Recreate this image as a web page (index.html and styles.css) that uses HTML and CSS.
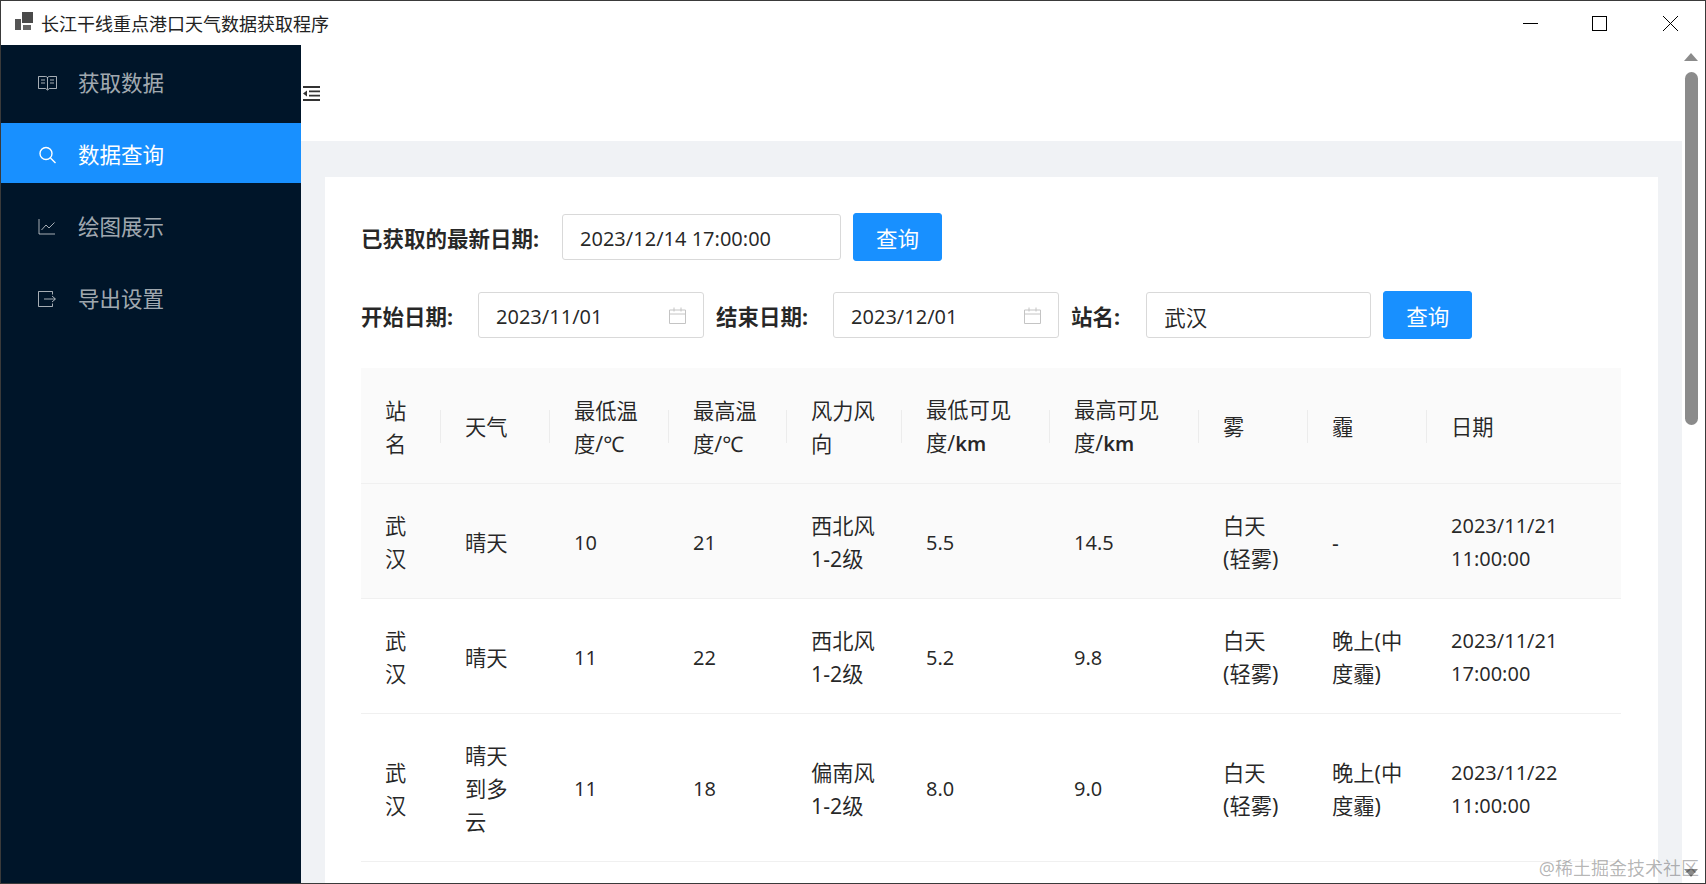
FILE: index.html
```html
<!DOCTYPE html>
<html lang="zh-CN">
<head>
  <meta charset="UTF-8">
  <title>长江干线重点港口天气数据获取程序</title>
  <link rel="stylesheet" href="styles.css">
</head>
<body>

<div class="window">
  <!-- 标题栏 -->
  <div class="titlebar">
    <svg class="app-logo" width="18" height="18" viewBox="0 0 18 18">
      <rect x="0" y="7" width="6" height="11" fill="#555"/>
      <rect x="7" y="0" width="11" height="11" fill="#4a4a4a"/>
      <rect x="8" y="13" width="8" height="5" fill="#666"/>
    </svg>
    <div class="app-title">长江干线重点港口天气数据获取程序</div>
    <div class="win-controls">
      <svg class="win-min" width="15" height="15" viewBox="0 0 15 15"><path d="M0 7.5H15" stroke="#000" fill="none"/></svg>
      <svg class="win-max" width="15" height="15" viewBox="0 0 15 15"><rect x="0.5" y="0.5" width="14" height="14" stroke="#000" fill="none"/></svg>
      <svg class="win-close" width="15" height="15" viewBox="0 0 15 15"><path d="M0 0L15 15M15 0L0 15" stroke="#000" fill="none"/></svg>
    </div>
  </div>

  <div class="app-body">
    <!-- 侧边菜单 -->
    <div class="sidebar">
      <div class="menu-item">
        <svg class="menu-icon" width="19" height="16" viewBox="0 0 19 16">
          <path d="M.5 1.5H7.5C8.7 1.5 9.5 2.2 9.5 3.2C9.5 2.2 10.3 1.5 11.5 1.5H18.5V13.5H11.5L9.5 15L7.5 13.5H.5ZM9.5 3.2V14.5M3 5H7M3 8H7M12 5H16M12 8H16" stroke="currentColor" fill="none"/>
        </svg>
        <span>获取数据</span>
      </div>
      <div class="menu-item active">
        <svg class="menu-icon" width="19" height="18" viewBox="0 0 19 18">
          <circle cx="8" cy="7.5" r="6" stroke="currentColor" stroke-width="1.4" fill="none"/>
          <path d="M12.5 12L17.5 17" stroke="currentColor" stroke-width="1.4" fill="none"/>
        </svg>
        <span>数据查询</span>
      </div>
      <div class="menu-item">
        <svg class="menu-icon" width="19" height="16" viewBox="0 0 19 16">
          <path d="M1 0V15H17M3.5 11L8 6L11 9L16.5 3.5" stroke="currentColor" fill="none"/>
        </svg>
        <span>绘图展示</span>
      </div>
      <div class="menu-item">
        <svg class="menu-icon" width="19" height="16" viewBox="0 0 19 16">
          <path d="M14.5 3.5V.5H.5V15.5H14.5V12.5M6 8H17M14 5L17.5 8L14 11" stroke="currentColor" fill="none"/>
        </svg>
        <span>导出设置</span>
      </div>
    </div>

    <div class="main">
      <div class="page-header">
        <svg class="collapse-icon" width="17" height="15" viewBox="0 0 17 15">
          <path d="M0 0H17V2H0ZM6 4.5H17V6.2H6ZM6 8.8H17V10.5H6ZM0 13H17V15H0Z" fill="#333"/>
          <path d="M0 7.5L4 4.5V10.5Z" fill="#333"/>
        </svg>
      </div>

      <div class="page-content">
        <div class="card">
          <div class="form-row">
            <label class="form-label">已获取的最新日期:</label>
            <div class="input w-latest num">2023/12/14 17:00:00</div>
            <button class="btn">查询</button>
          </div>

          <div class="form-row filters">
            <label class="form-label">开始日期:</label>
            <div class="input w-date num">
              <span>2023/11/01</span>
              <svg class="calendar-icon" width="17" height="17" viewBox="0 0 17 17">
                <path d="M.5 3H16.5V16.5H.5ZM.5 7H16.5M5 .5V4.5M12 .5V4.5" stroke="#c4c4c4" fill="none"/>
              </svg>
            </div>
            <label class="form-label next">结束日期:</label>
            <div class="input w-date num">
              <span>2023/12/01</span>
              <svg class="calendar-icon" width="17" height="17" viewBox="0 0 17 17">
                <path d="M.5 3H16.5V16.5H.5ZM.5 7H16.5M5 .5V4.5M12 .5V4.5" stroke="#c4c4c4" fill="none"/>
              </svg>
            </div>
            <label class="form-label next">站名:</label>
            <div class="input w-station">武汉</div>
            <button class="btn">查询</button>
          </div>

          <table class="data-table">
            <colgroup>
              <col class="c-station">
              <col class="c-weather">
              <col class="c-temp">
              <col class="c-temp2">
              <col class="c-wind">
              <col class="c-vis">
              <col class="c-vis2">
              <col class="c-fog">
              <col class="c-haze">
              <col class="c-date">
            </colgroup>
            <thead>
              <tr>
                <th>站名</th>
                <th>天气</th>
                <th>最低温度/℃</th>
                <th>最高温度/℃</th>
                <th>风力风向</th>
                <th>最低可见<br>度/<span class="unit">km</span></th>
                <th>最高可见<br>度/<span class="unit">km</span></th>
                <th>雾</th>
                <th>霾</th>
                <th>日期</th>
              </tr>
            </thead>
            <tbody>
              <tr class="hover">
                <td>武汉</td>
                <td>晴天</td>
                <td class="num">10</td>
                <td class="num">21</td>
                <td>西北风 1-2级</td>
                <td class="num">5.5</td>
                <td class="num">14.5</td>
                <td>白天(轻雾)</td>
                <td>-</td>
                <td class="num">2023/11/21 11:00:00</td>
              </tr>
              <tr>
                <td>武汉</td>
                <td>晴天</td>
                <td class="num">11</td>
                <td class="num">22</td>
                <td>西北风 1-2级</td>
                <td class="num">5.2</td>
                <td class="num">9.8</td>
                <td>白天(轻雾)</td>
                <td>晚上(中度霾)</td>
                <td class="num">2023/11/21 17:00:00</td>
              </tr>
              <tr>
                <td>武汉</td>
                <td>晴天到多云</td>
                <td class="num">11</td>
                <td class="num">18</td>
                <td>偏南风 1-2级</td>
                <td class="num">8.0</td>
                <td class="num">9.0</td>
                <td>白天(轻雾)</td>
                <td>晚上(中度霾)</td>
                <td class="num">2023/11/22 11:00:00</td>
              </tr>
            </tbody>
          </table>
        </div>
      </div>
    </div>

    <!-- 滚动条 -->
    <div class="scrollbar">
      <div class="arrow-up"></div>
      <div class="thumb"></div>
      <div class="track"></div>
      <div class="arrow-down"></div>
    </div>
  </div>

  <div class="watermark">@稀土掘金技术社区</div>
</div>

</body>
</html>
```

FILE: styles.css
```css
* {
  box-sizing: border-box;
}

html, body {
  height: 100%;
}

body {
  margin: 0;
  overflow: hidden;
  background: #fff;
  color: rgba(0, 0, 0, 0.85);
  font-family: "Noto Sans", "Noto Sans CJK SC", sans-serif;
  font-size: 21.5px;
}

.window {
  position: relative;
  display: flex;
  flex-direction: column;
  height: 884px;
  overflow: hidden;
  border: 1px solid #3a3a3a;
}

/* 标题栏 */
.titlebar {
  display: flex;
  align-items: center;
  flex: none;
  height: 44px;
  padding-left: 14px;
  background: #fff;
}

.app-logo {
  flex: none;
  margin-top: -4px;
}

.app-title {
  margin-left: 8px;
  font-size: 18px;
  color: #222;
}

.win-controls {
  display: flex;
  margin-left: auto;
  margin-right: 27px;
}

.win-min {
  margin-right: 54px;
}

.win-max {
  margin-right: 56px;
}

/* 主体 */
.app-body {
  display: flex;
  flex: 1;
  min-height: 0;
}

.sidebar {
  flex: none;
  width: 300px;
  padding-top: 6px;
  background: #001529;
}

.menu-item {
  display: flex;
  align-items: center;
  height: 60px;
  margin-bottom: 12px;
  padding: 4px 0 0 37px;
  color: rgba(255, 255, 255, 0.65);
}

.menu-item span {
  margin-bottom: 4px;
}

.menu-item.active {
  background: #1890ff;
  color: #fff;
}

.menu-icon {
  flex: none;
  margin-right: 21px;
}

.main {
  display: flex;
  flex-direction: column;
  flex: 1;
  min-width: 0;
}

.page-header {
  flex: none;
  height: 96px;
  padding: 41px 0 0 2px;
  background: #fff;
}

.collapse-icon {
  display: block;
}

.page-content {
  flex: 1;
  min-height: 0;
  padding: 36px 24px 0;
  background: #f0f2f5;
}

.card {
  height: 100%;
  padding: 36px;
  background: #fff;
}

/* 查询表单 */
.form-row {
  display: flex;
  align-items: center;
  height: 48px;
  margin-bottom: 30px;
}

.form-row.filters {
  margin-bottom: 29px;
}

.form-label {
  margin-right: 25px;
  font-weight: 700;
}

.form-label.next {
  margin-left: 12px;
}

.input {
  display: flex;
  align-items: center;
  justify-content: space-between;
  height: 46px;
  padding: 2px 17px 0;
  border: 1px solid #d9d9d9;
  border-radius: 3px;
  background: #fff;
}

.input.num,
.data-table td.num {
  font-size: 20px;
}

.w-latest {
  width: 279px;
  margin-left: -2px;
}

.w-date {
  width: 226px;
}

.w-station {
  width: 225px;
  margin-left: 1px;
}

.calendar-icon {
  flex: none;
  margin-top: -2px;
}

.btn {
  width: 89px;
  height: 48px;
  margin-left: 12px;
  padding: 0;
  border: 1px solid #1890ff;
  border-radius: 3px;
  background: #1890ff;
  color: #fff;
  font-family: inherit;
  font-size: 21.5px;
}

/* 表格 */
.data-table {
  width: 1260px;
  border-collapse: collapse;
  table-layout: fixed;
  font-size: 21.3px;
  line-height: 33px;
}

.c-station { width: 80px; }
.c-weather { width: 109px; }
.c-temp { width: 119px; }
.c-temp2 { width: 118px; }
.c-wind { width: 115px; }
.c-vis { width: 148px; }
.c-vis2 { width: 149px; }
.c-fog { width: 109px; }
.c-haze { width: 119px; }
.c-date { width: 194px; }

.data-table th,
.data-table td {
  padding: 25px 23px 23px 24px;
  border-bottom: 1px solid #f0f0f0;
  text-align: left;
  font-weight: 400;
}

.data-table th {
  position: relative;
  background: #fafafa;
}

.data-table th + th::before {
  content: "";
  position: absolute;
  top: 50%;
  left: -1px;
  width: 1px;
  height: 33px;
  margin-top: -16px;
  background: #ececec;
}

.data-table .unit {
  font-size: 20px;
  font-weight: 600;
}

.data-table tr.hover td {
  background: #fafafa;
}

/* 滚动条 */
.scrollbar {
  display: flex;
  flex-direction: column;
  align-items: center;
  flex: none;
  width: 23px;
  height: 100%;
  padding: 8px 5px 6px 0;
  background: #fff;
}

.arrow-up {
  flex: none;
  width: 0;
  height: 0;
  border-left: 7px solid transparent;
  border-right: 7px solid transparent;
  border-bottom: 8px solid #8b8b8b;
}

.thumb {
  flex: none;
  width: 13px;
  height: 353px;
  margin-top: 11px;
  border-radius: 7px;
  background: #8b8b8b;
}

.track {
  flex: 1;
}

.arrow-down {
  flex: none;
  width: 0;
  height: 0;
  border-left: 7px solid transparent;
  border-right: 7px solid transparent;
  border-top: 8px solid #8b8b8b;
}

.watermark {
  position: absolute;
  right: 6px;
  bottom: 3px;
  font-size: 18px;
  line-height: 24px;
  color: rgba(0, 0, 0, 0.3);
}
```
